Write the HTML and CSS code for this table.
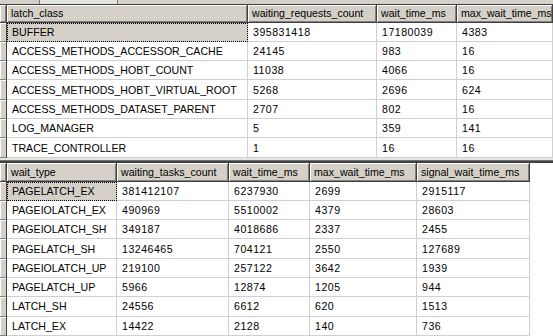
FILE: index.html
```html
<!DOCTYPE html>
<html lang="en">
<head>
    <meta charset="UTF-8">
    <title>Latch and wait statistics</title>
    <link rel="stylesheet" href="styles.css">
</head>
<body>
<div class="strip">
    <span class="tab tab-a"></span>
    <span class="tab tab-b"></span>
</div>

<div class="grid grid-latch">
    <div class="hd corner"></div>
    <div class="hd">latch_class</div>
    <div class="hd">waiting_requests_count</div>
    <div class="hd">wait_time_ms</div>
    <div class="hd">max_wait_time_ms</div>

    <div class="sel"></div><div class="cell focus">BUFFER</div><div class="cell num">395831418</div><div class="cell num">17180039</div><div class="cell num">4383</div>
    <div class="sel"></div><div class="cell">ACCESS_METHODS_ACCESSOR_CACHE</div><div class="cell num">24145</div><div class="cell num">983</div><div class="cell num">16</div>
    <div class="sel"></div><div class="cell">ACCESS_METHODS_HOBT_COUNT</div><div class="cell num">11038</div><div class="cell num">4066</div><div class="cell num">16</div>
    <div class="sel"></div><div class="cell">ACCESS_METHODS_HOBT_VIRTUAL_ROOT</div><div class="cell num">5268</div><div class="cell num">2696</div><div class="cell num">624</div>
    <div class="sel"></div><div class="cell">ACCESS_METHODS_DATASET_PARENT</div><div class="cell num">2707</div><div class="cell num">802</div><div class="cell num">16</div>
    <div class="sel"></div><div class="cell">LOG_MANAGER</div><div class="cell num">5</div><div class="cell num">359</div><div class="cell num">141</div>
    <div class="sel"></div><div class="cell">TRACE_CONTROLLER</div><div class="cell num">1</div><div class="cell num">16</div><div class="cell num">16</div>
</div>

<div class="splitter"></div>

<div class="grid grid-wait">
    <div class="hd corner"></div>
    <div class="hd">wait_type</div>
    <div class="hd">waiting_tasks_count</div>
    <div class="hd">wait_time_ms</div>
    <div class="hd">max_wait_time_ms</div>
    <div class="hd">signal_wait_time_ms</div>

    <div class="sel"></div><div class="cell focus">PAGELATCH_EX</div><div class="cell num">381412107</div><div class="cell num">6237930</div><div class="cell num">2699</div><div class="cell num">2915117</div>
    <div class="sel"></div><div class="cell">PAGEIOLATCH_EX</div><div class="cell num">490969</div><div class="cell num">5510002</div><div class="cell num">4379</div><div class="cell num">28603</div>
    <div class="sel"></div><div class="cell">PAGEIOLATCH_SH</div><div class="cell num">349187</div><div class="cell num">4018686</div><div class="cell num">2337</div><div class="cell num">2455</div>
    <div class="sel"></div><div class="cell">PAGELATCH_SH</div><div class="cell num">13246465</div><div class="cell num">704121</div><div class="cell num">2550</div><div class="cell num">127689</div>
    <div class="sel"></div><div class="cell">PAGEIOLATCH_UP</div><div class="cell num">219100</div><div class="cell num">257122</div><div class="cell num">3642</div><div class="cell num">1939</div>
    <div class="sel"></div><div class="cell">PAGELATCH_UP</div><div class="cell num">5966</div><div class="cell num">12874</div><div class="cell num">1205</div><div class="cell num">944</div>
    <div class="sel"></div><div class="cell">LATCH_SH</div><div class="cell num">24556</div><div class="cell num">6612</div><div class="cell num">620</div><div class="cell num">1513</div>
    <div class="sel"></div><div class="cell">LATCH_EX</div><div class="cell num">14422</div><div class="cell num">2128</div><div class="cell num">140</div><div class="cell num">736</div>
</div>
</body>
</html>
```

FILE: styles.css
```css
body {
    margin: 0;
    padding: 0;
    width: 553px;
    height: 336px;
    overflow: hidden;
    background: #fff;
    color: #000;
    font-family: "Liberation Sans", Arial, sans-serif;
    font-size: 10.6px;
}

/* bottom edge of the pane above */
.strip {
    display: flex;
    height: 4px;
    background: #d4d0c8;
    border-bottom: 1px solid #404040;
}
.tab {
    height: 4px;
    box-sizing: border-box;
}
.tab-a {
    width: 40px;
    border-right: 1px solid #808080;
}
.tab-b {
    width: 78px;
    background: #e4e2dc;
    border-right: 1px solid #808080;
}

.grid {
    display: grid;
    background: #fff;
}
.grid-latch {
    grid-template-columns: 7px 241px 129px 80px 96px;
    grid-template-rows: 17.6px repeat(7, 19.3px);
    width: 553px;
}
.grid-wait {
    grid-template-columns: 7px 110px 112px 81px 107px 113px;
    grid-template-rows: 18.6px repeat(8, 19.3px);
    width: 530px;
}

.hd {
    display: flex;
    align-items: center;
    padding-left: 4px;
    background: #d4d0c8;
    box-sizing: border-box;
    border-right: 1px solid #404040;
    border-bottom: 1px solid #404040;
    box-shadow: inset 1px 1px #fff, inset -1px -1px #808080;
    white-space: nowrap;
    overflow: hidden;
}
.hd.corner {
    padding: 0;
}

.sel {
    background: #d4d0c8;
    box-sizing: border-box;
    border-right: 1px solid #404040;
    border-bottom: 1px solid #808080;
    box-shadow: inset 1px 1px #fff;
}

.cell {
    display: flex;
    align-items: center;
    padding-left: 5px;
    box-sizing: border-box;
    border-right: 1px solid #d0d0d0;
    border-bottom: 1px solid #d0d0d0;
    white-space: nowrap;
    overflow: hidden;
}
.cell.num {
    letter-spacing: 0.5px;
}
.cell.focus {
    background: #d4d0c8;
    outline: 1px dotted #000;
    outline-offset: -1px;
}

.splitter {
    height: 5.3px;
    background: linear-gradient(#e6e4de 0, #e6e4de 2.3px, #808080 2.3px, #404040 3.3px, #404040 5.3px);
}
```
